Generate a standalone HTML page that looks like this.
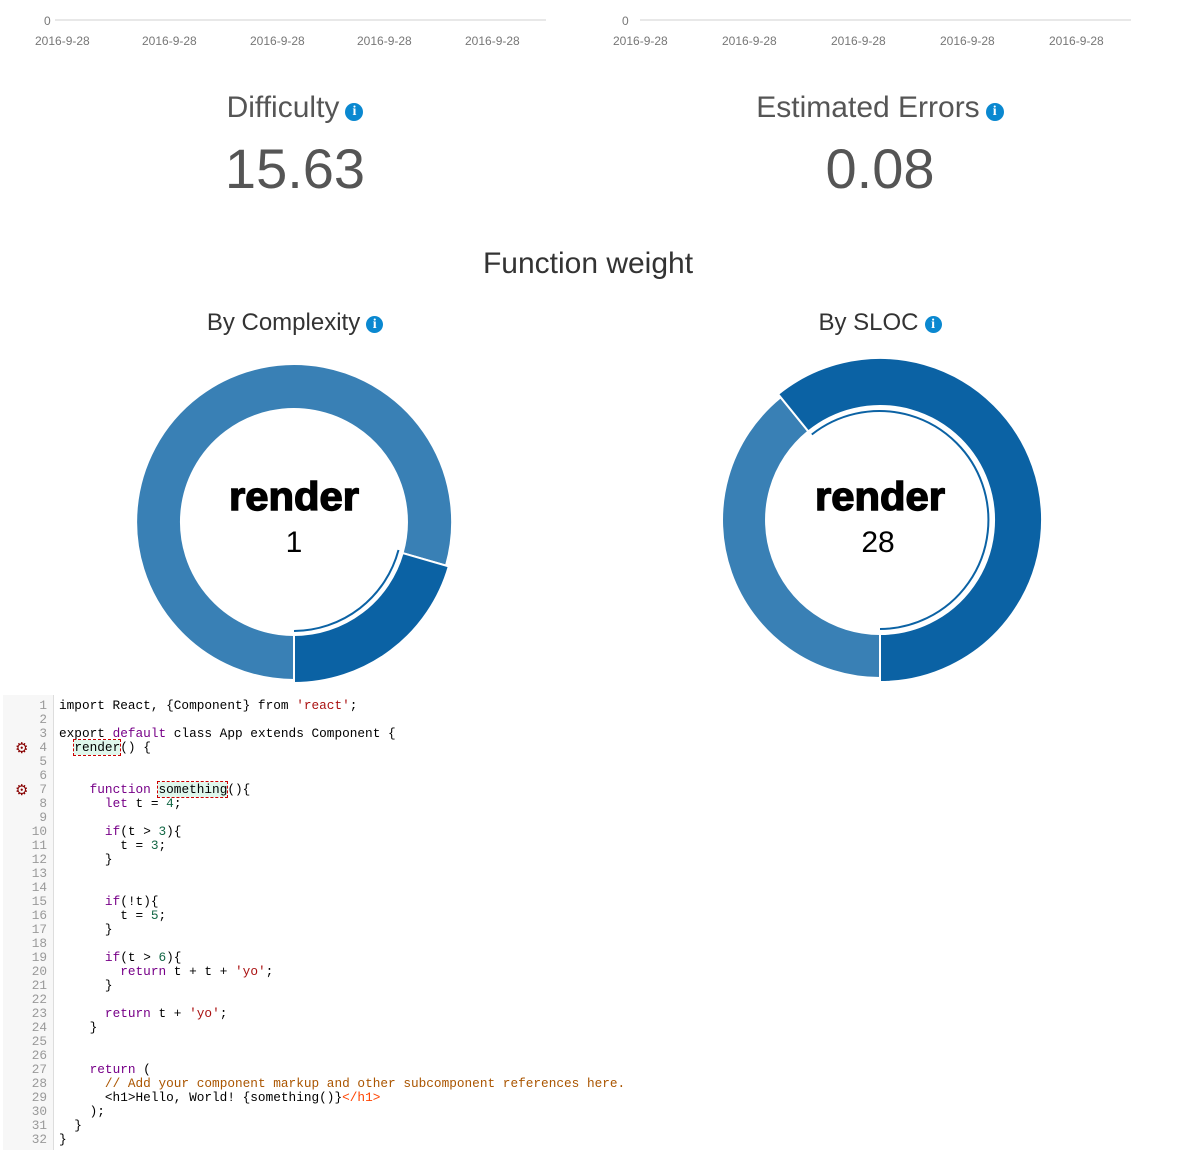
<!DOCTYPE html>
<html><head><meta charset="utf-8"><style>
body{margin:0;width:1185px;height:1150px;background:#fff;position:relative;overflow:hidden;font-family:"Liberation Sans",Arial,sans-serif}
.a{position:absolute}
.ax{font-size:12px;color:#777;}
.h{color:#555;text-align:center;white-space:nowrap}
.i{display:inline-block;width:18px;height:18px;border-radius:50%;background:#0a88d0;color:#fff;font:bold 14px/18px "Liberation Serif",serif;text-align:center;vertical-align:2px;margin-left:6px}
.code{position:absolute;left:0;top:699px;width:1185px;font-family:"Liberation Mono",monospace;font-size:12.75px;line-height:14px;color:#000}
.ln{position:absolute;left:3px;top:695px;width:50px;height:455px;background:#f7f7f7;border-right:1px solid #ddd}
.row{height:14px;white-space:pre;position:relative}
.row .n{position:absolute;left:0;width:47px;text-align:right;color:#999}
.row .c{position:absolute;left:59px}
.k{color:#708}.s{color:#a11}.m{color:#164}.cm{color:#a50}.t{color:#f40}
.hl{background:#dff7ec;outline:1px dashed #c00;}
.g{position:absolute;left:15px;top:0px;color:#800;font:bold 15px/14px "DejaVu Sans",sans-serif}
</style></head><body>
<div class="a ax" style="left:44px;top:14px">0</div>
<div class="a" style="left:55px;top:19px;width:491px;height:2px;background:#e8e8e8"></div>
<div class="a ax" style="left:35px;top:34px">2016-9-28</div>
<div class="a ax" style="left:142px;top:34px">2016-9-28</div>
<div class="a ax" style="left:250px;top:34px">2016-9-28</div>
<div class="a ax" style="left:357px;top:34px">2016-9-28</div>
<div class="a ax" style="left:465px;top:34px">2016-9-28</div>
<div class="a ax" style="left:622px;top:14px">0</div>
<div class="a" style="left:640px;top:19px;width:491px;height:2px;background:#e8e8e8"></div>
<div class="a ax" style="left:613px;top:34px">2016-9-28</div>
<div class="a ax" style="left:722px;top:34px">2016-9-28</div>
<div class="a ax" style="left:831px;top:34px">2016-9-28</div>
<div class="a ax" style="left:940px;top:34px">2016-9-28</div>
<div class="a ax" style="left:1049px;top:34px">2016-9-28</div>

<div class="a h" style="left:95px;width:400px;top:91px;font-size:30px">Difficulty<span class="i">i</span></div>
<div class="a h" style="left:95px;width:400px;top:136px;font-size:56px">15.63</div>
<div class="a h" style="left:680px;width:400px;top:91px;font-size:30px">Estimated Errors<span class="i">i</span></div>
<div class="a h" style="left:680px;width:400px;top:136px;font-size:56px">0.08</div>
<div class="a h" style="left:388px;width:400px;top:247px;font-size:30px;color:#333">Function weight</div>
<div class="a h" style="left:95px;width:400px;top:309px;font-size:24px;color:#333">By Complexity<span class="i" style="width:17px;height:17px;line-height:17px">i</span></div>
<div class="a h" style="left:680px;width:400px;top:309px;font-size:24px;color:#333">By SLOC<span class="i" style="width:17px;height:17px;line-height:17px">i</span></div>

<svg class="a" style="left:0;top:0" width="1185" height="700">
<path d="M294,680 A158,158 0 1 1 446,565.6 L402.6,553.1 A113,113 0 1 0 294,635 Z" fill="#3980b5" stroke="#fff" stroke-width="2"/>
<path d="M448.8,566.4 A161,161 0 0 1 294,683 L294,635 A113,113 0 0 0 402.6,553.1 Z" fill="#0b62a4" stroke="#fff" stroke-width="2"/>
<path d="M398.5,550 A109,109 0 0 1 294,631" fill="none" stroke="#0b62a4" stroke-width="2"/>
<path d="M880,678 A158,158 0 0 1 780.6,397.2 L808.3,431.4 A114,114 0 0 0 880,634 Z" fill="#3980b5" stroke="#fff" stroke-width="2"/>
<path d="M778.1,394.1 A162,162 0 1 1 880,682 L880,634 A114,114 0 1 0 808.3,431.4 Z" fill="#0b62a4" stroke="#fff" stroke-width="2"/>
<path d="M811.8,434.5 A109,109 0 1 1 880,629" fill="none" stroke="#0b62a4" stroke-width="2"/>
<text x="294" y="510" text-anchor="middle" font-family="Liberation Sans" font-weight="bold" font-size="40" stroke="#000" stroke-width="1.4" textLength="130" lengthAdjust="spacingAndGlyphs">render</text>
<text x="294" y="552" text-anchor="middle" font-family="Liberation Sans" font-size="30">1</text>
<text x="880" y="510" text-anchor="middle" font-family="Liberation Sans" font-weight="bold" font-size="40" stroke="#000" stroke-width="1.4" textLength="130" lengthAdjust="spacingAndGlyphs">render</text>
<text x="878" y="552" text-anchor="middle" font-family="Liberation Sans" font-size="30">28</text>
</svg>

<div class="ln"></div>
<div class="code">
<div class="row"><span class="n">1</span><span class="c">import React, {Component} from <span class="s">'react'</span>;</span></div>
<div class="row"><span class="n">2</span></div>
<div class="row"><span class="n">3</span><span class="c">export <span class="k">default</span> class App extends Component {</span></div>
<div class="row"><span class="g">⚙</span><span class="n">4</span><span class="c">  <span class="hl">render</span>() {</span></div>
<div class="row"><span class="n">5</span></div>
<div class="row"><span class="n">6</span></div>
<div class="row"><span class="g">⚙</span><span class="n">7</span><span class="c">    <span class="k">function</span> <span class="hl">something</span>(){</span></div>
<div class="row"><span class="n">8</span><span class="c">      <span class="k">let</span> t = <span class="m">4</span>;</span></div>
<div class="row"><span class="n">9</span></div>
<div class="row"><span class="n">10</span><span class="c">      <span class="k">if</span>(t &gt; <span class="m">3</span>){</span></div>
<div class="row"><span class="n">11</span><span class="c">        t = <span class="m">3</span>;</span></div>
<div class="row"><span class="n">12</span><span class="c">      }</span></div>
<div class="row"><span class="n">13</span></div>
<div class="row"><span class="n">14</span></div>
<div class="row"><span class="n">15</span><span class="c">      <span class="k">if</span>(!t){</span></div>
<div class="row"><span class="n">16</span><span class="c">        t = <span class="m">5</span>;</span></div>
<div class="row"><span class="n">17</span><span class="c">      }</span></div>
<div class="row"><span class="n">18</span></div>
<div class="row"><span class="n">19</span><span class="c">      <span class="k">if</span>(t &gt; <span class="m">6</span>){</span></div>
<div class="row"><span class="n">20</span><span class="c">        <span class="k">return</span> t + t + <span class="s">'yo'</span>;</span></div>
<div class="row"><span class="n">21</span><span class="c">      }</span></div>
<div class="row"><span class="n">22</span></div>
<div class="row"><span class="n">23</span><span class="c">      <span class="k">return</span> t + <span class="s">'yo'</span>;</span></div>
<div class="row"><span class="n">24</span><span class="c">    }</span></div>
<div class="row"><span class="n">25</span></div>
<div class="row"><span class="n">26</span></div>
<div class="row"><span class="n">27</span><span class="c">    <span class="k">return</span> (</span></div>
<div class="row"><span class="n">28</span><span class="c">      <span class="cm">// Add your component markup and other subcomponent references here.</span></span></div>
<div class="row"><span class="n">29</span><span class="c">      &lt;h1&gt;Hello, World! {something()}<span class="t">&lt;/h1&gt;</span></span></div>
<div class="row"><span class="n">30</span><span class="c">    );</span></div>
<div class="row"><span class="n">31</span><span class="c">  }</span></div>
<div class="row"><span class="n">32</span><span class="c">}</span></div>
</div>
</body></html>
